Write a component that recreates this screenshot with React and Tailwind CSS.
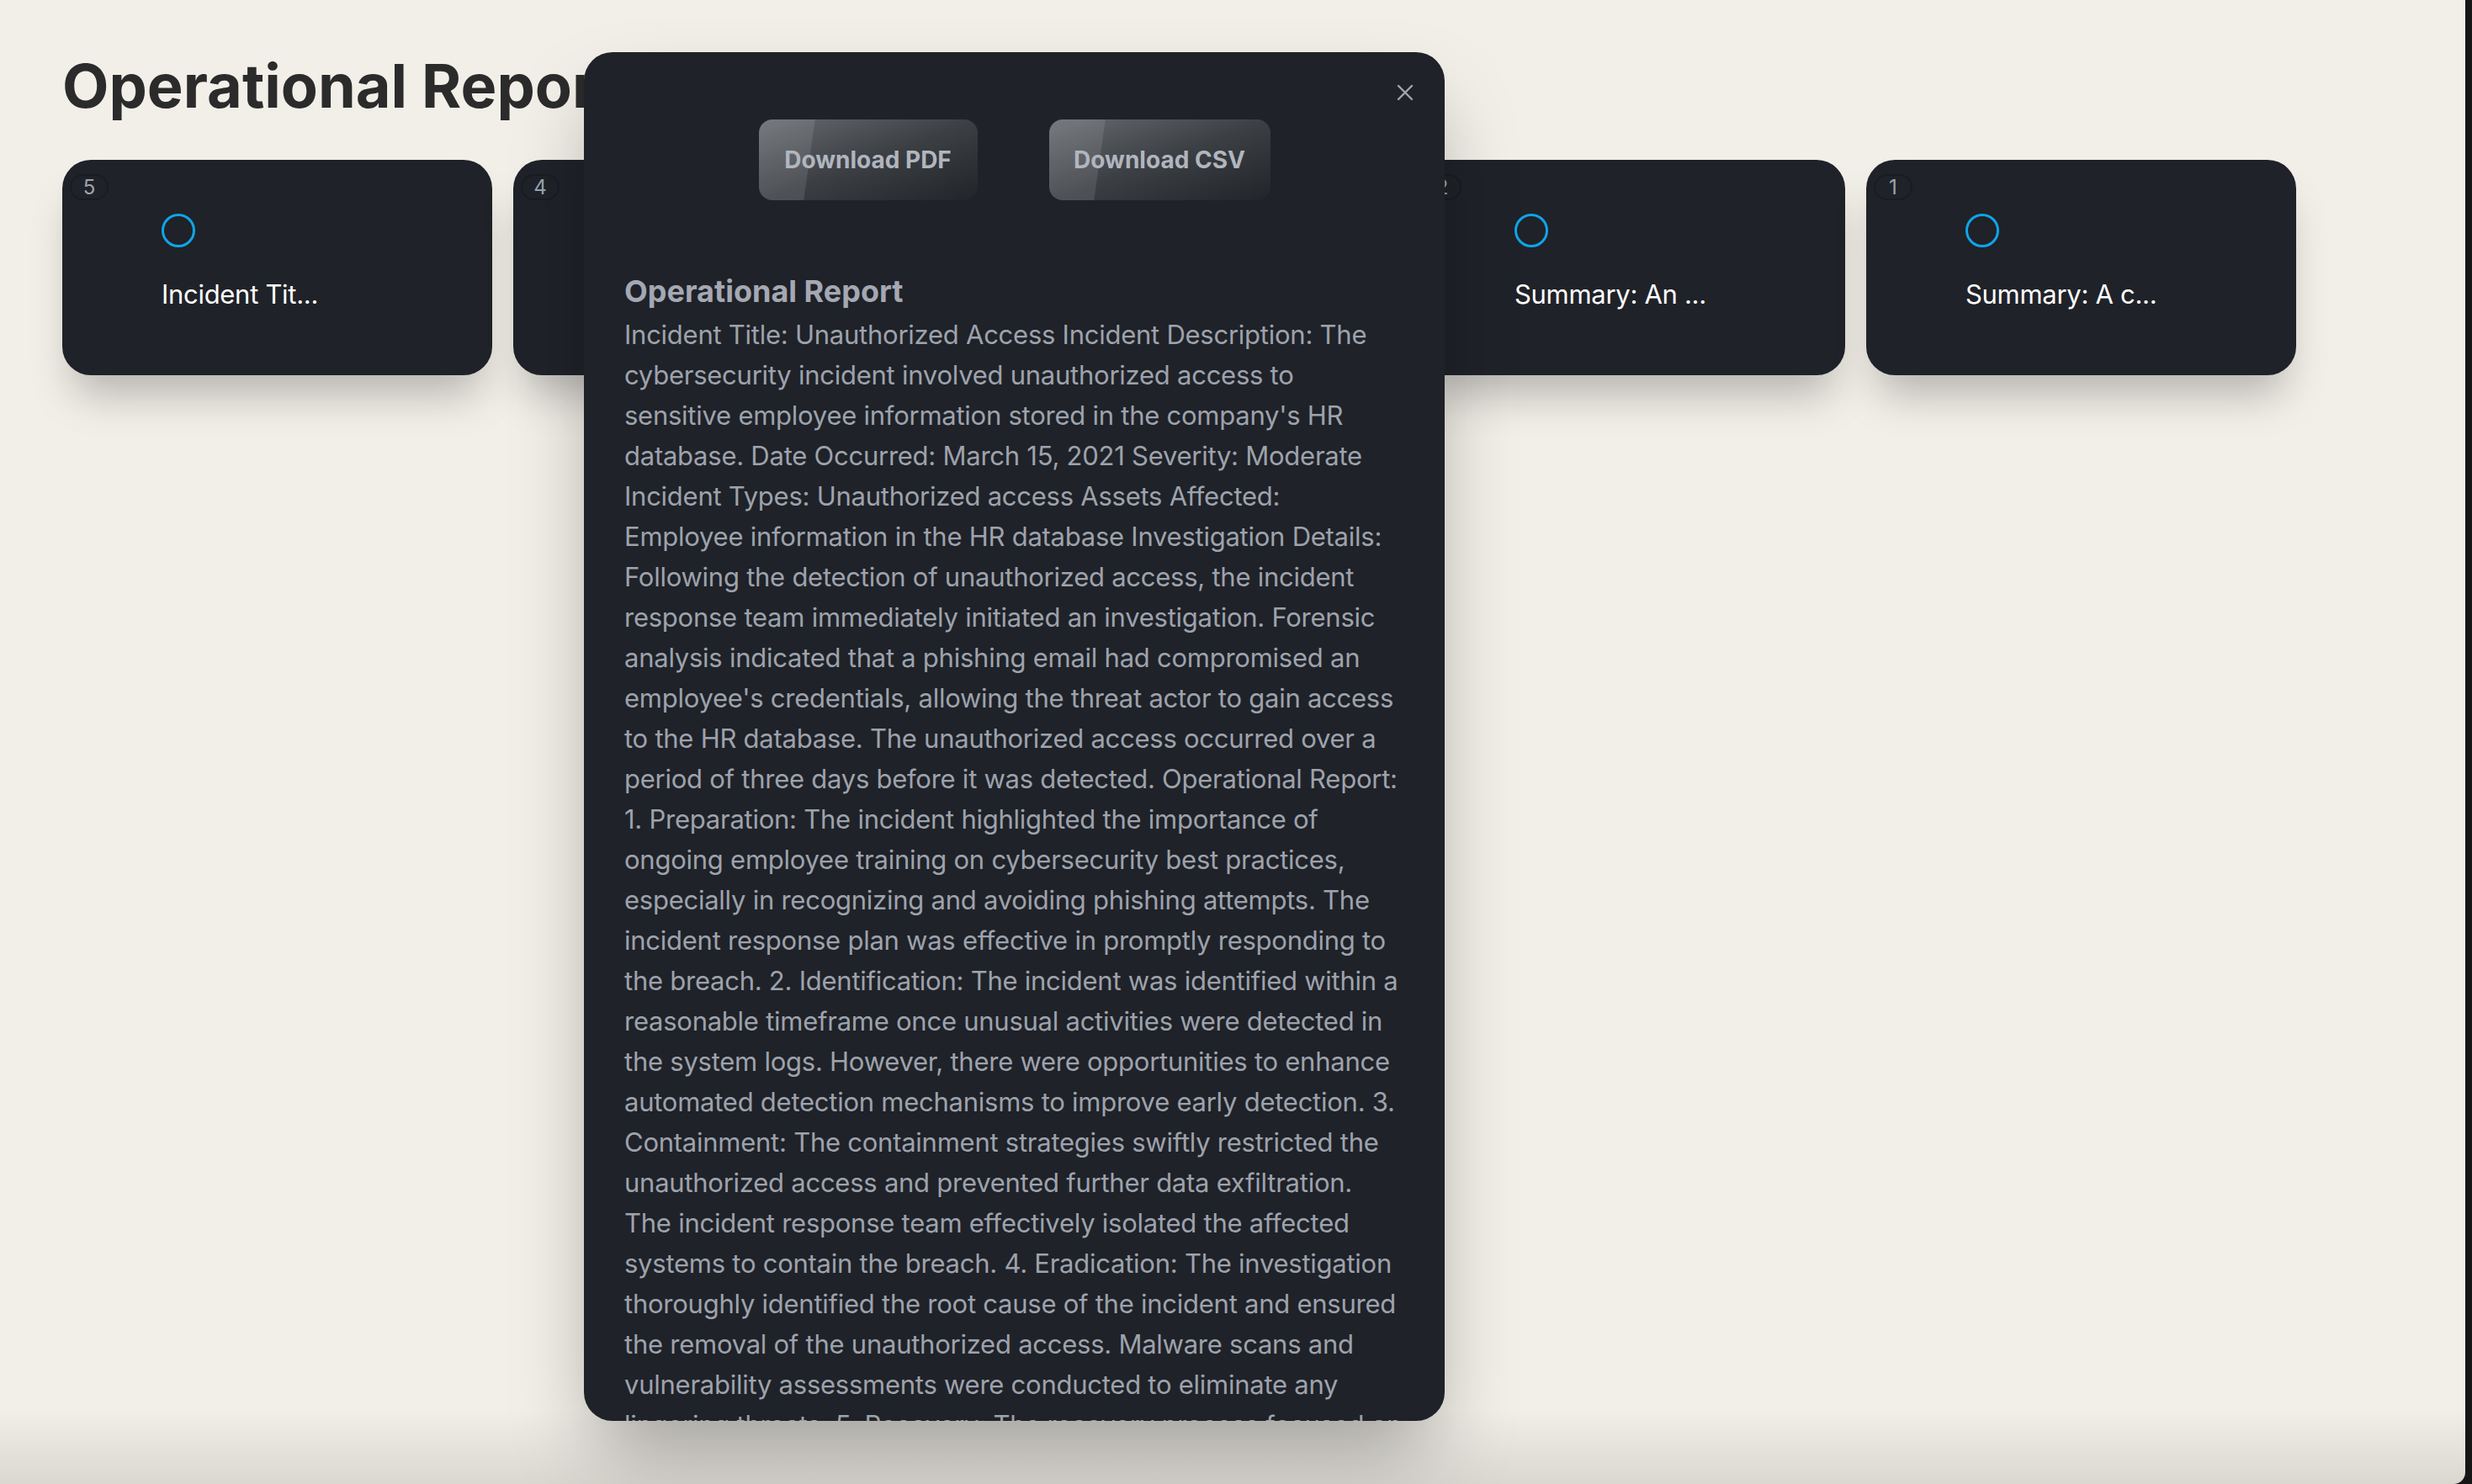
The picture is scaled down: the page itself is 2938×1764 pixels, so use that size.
import React from 'react';

const reportLines = [
  'Incident Title: Unauthorized Access Incident Description: The',
  'cybersecurity incident involved unauthorized access to',
  "sensitive employee information stored in the company's HR",
  'database. Date Occurred: March 15, 2021 Severity: Moderate',
  'Incident Types: Unauthorized access Assets Affected:',
  'Employee information in the HR database Investigation Details:',
  'Following the detection of unauthorized access, the incident',
  'response team immediately initiated an investigation. Forensic',
  'analysis indicated that a phishing email had compromised an',
  "employee's credentials, allowing the threat actor to gain access",
  'to the HR database. The unauthorized access occurred over a',
  'period of three days before it was detected. Operational Report:',
  '1. Preparation: The incident highlighted the importance of',
  'ongoing employee training on cybersecurity best practices,',
  'especially in recognizing and avoiding phishing attempts. The',
  'incident response plan was effective in promptly responding to',
  'the breach. 2. Identification: The incident was identified within a',
  'reasonable timeframe once unusual activities were detected in',
  'the system logs. However, there were opportunities to enhance',
  'automated detection mechanisms to improve early detection. 3.',
  'Containment: The containment strategies swiftly restricted the',
  'unauthorized access and prevented further data exfiltration.',
  'The incident response team effectively isolated the affected',
  'systems to contain the breach. 4. Eradication: The investigation',
  'thoroughly identified the root cause of the incident and ensured',
  'the removal of the unauthorized access. Malware scans and',
  'vulnerability assessments were conducted to eliminate any',
  'lingering threats. 5. Recovery: The recovery process focused on',
  'restoring normal operations and verifying the integrity of the',
  'affected systems and data.',
];

const reports = [
  { id: 5, title: 'Incident Title: Unauthorized Access' },
  { id: 4, title: 'Incident Title: Phishing Attempt' },
  { id: 3, title: 'Summary: The incident response team' },
  { id: 2, title: 'Summary: An unauthorized access attempt' },
  { id: 1, title: 'Summary: A cybersecurity incident' },
];

const truncate = (text, max = 12) => (text.length > max ? text.slice(0, max) + '...' : text);

const ReportCard = ({ report }) => (
  <div className="relative h-[256px] w-[511px] shrink-0 rounded-[34px] bg-[#1f2228] shadow-[0_36px_50px_-14px_rgba(0,0,0,0.25)]">
    <span className="absolute left-[9px] top-[17px] flex h-[31px] w-[46px] items-center justify-center rounded-full border-2 border-[#1a1c21] text-[24px] leading-none text-[#9ca3af]">
      {report.id}
    </span>
    <div className="pl-[118px] pt-[64px]">
      <div className="h-[40px] w-[40px] rounded-full border-[3px] border-[#0ea5e9]" />
      <p className="mt-[32px] text-[31px] leading-[48px] tracking-[-0.3px] text-white">{truncate(report.title)}</p>
    </div>
  </div>
);

const GlassButton = ({ label, className }) => (
  <button
    className={
      'relative h-[96px] overflow-hidden rounded-[16px] bg-linear-to-br from-[#686b70] via-[#3c3f44] to-[#212429] text-[28px] font-bold text-[#b1b5be] ' +
      className
    }
  >
    <span className="absolute -left-[20px] -top-[10px] -bottom-[10px] w-[80px] skew-x-[-8deg] bg-white/10" />
    <span className="relative">{label}</span>
  </button>
);

const ReportModal = () => (
  <div className="absolute left-[694px] top-[62px] h-[1627px] w-[1023px] overflow-hidden rounded-[34px] bg-[#1f2228] px-[48px] pt-[80px] shadow-[0_50px_100px_-20px_rgba(0,0,0,0.35)]">
    {/* Close */}
    <button className="absolute right-[37px] top-[38px] h-[20px] w-[20px] text-[#a2a6b0]">
      <svg viewBox="0 0 20 20" width="20" height="20" fill="none" stroke="currentColor" strokeWidth="2.4" strokeLinecap="round">
        <path d="M2 2 L18 18 M18 2 L2 18" />
      </svg>
    </button>

    {/* Downloads */}
    <div className="flex justify-center gap-[85px]">
      <GlassButton label="Download PDF" className="w-[260px]" />
      <GlassButton label="Download CSV" className="w-[263px]" />
    </div>

    {/* Report body */}
    <h2 className="mt-[80px] text-[36px] font-bold leading-[56px] text-[#a4a8b3]">Operational Report</h2>
    <div className="text-[31px] leading-[48px] tracking-[-0.25px] text-[#9ea2ad]">
      {reportLines.map((line, i) => (
        <span key={i} className="block whitespace-nowrap">
          {line}
        </span>
      ))}
    </div>
  </div>
);

export default function App() {
  return (
    <div className="flex h-[1764px] w-[2938px] overflow-hidden bg-[#161616] font-['Inter',sans-serif]">
      <div className="relative h-full w-[2930px] overflow-hidden rounded-br-[14px] bg-[#f2efe8]">
        <main className="px-[74px] pt-[62px]">
          <h1 className="text-[72px] font-bold leading-[80px] text-[#2b2b2b]">Operational Reports</h1>
          <div className="mt-[48px] flex gap-[25px]">
            {reports.map((report) => (
              <ReportCard key={report.id} report={report} />
            ))}
          </div>
        </main>

        <div className="pointer-events-none absolute inset-x-0 bottom-0 h-[90px] bg-linear-to-b from-transparent to-black/10" />

        <ReportModal />
      </div>
    </div>
  );
}
